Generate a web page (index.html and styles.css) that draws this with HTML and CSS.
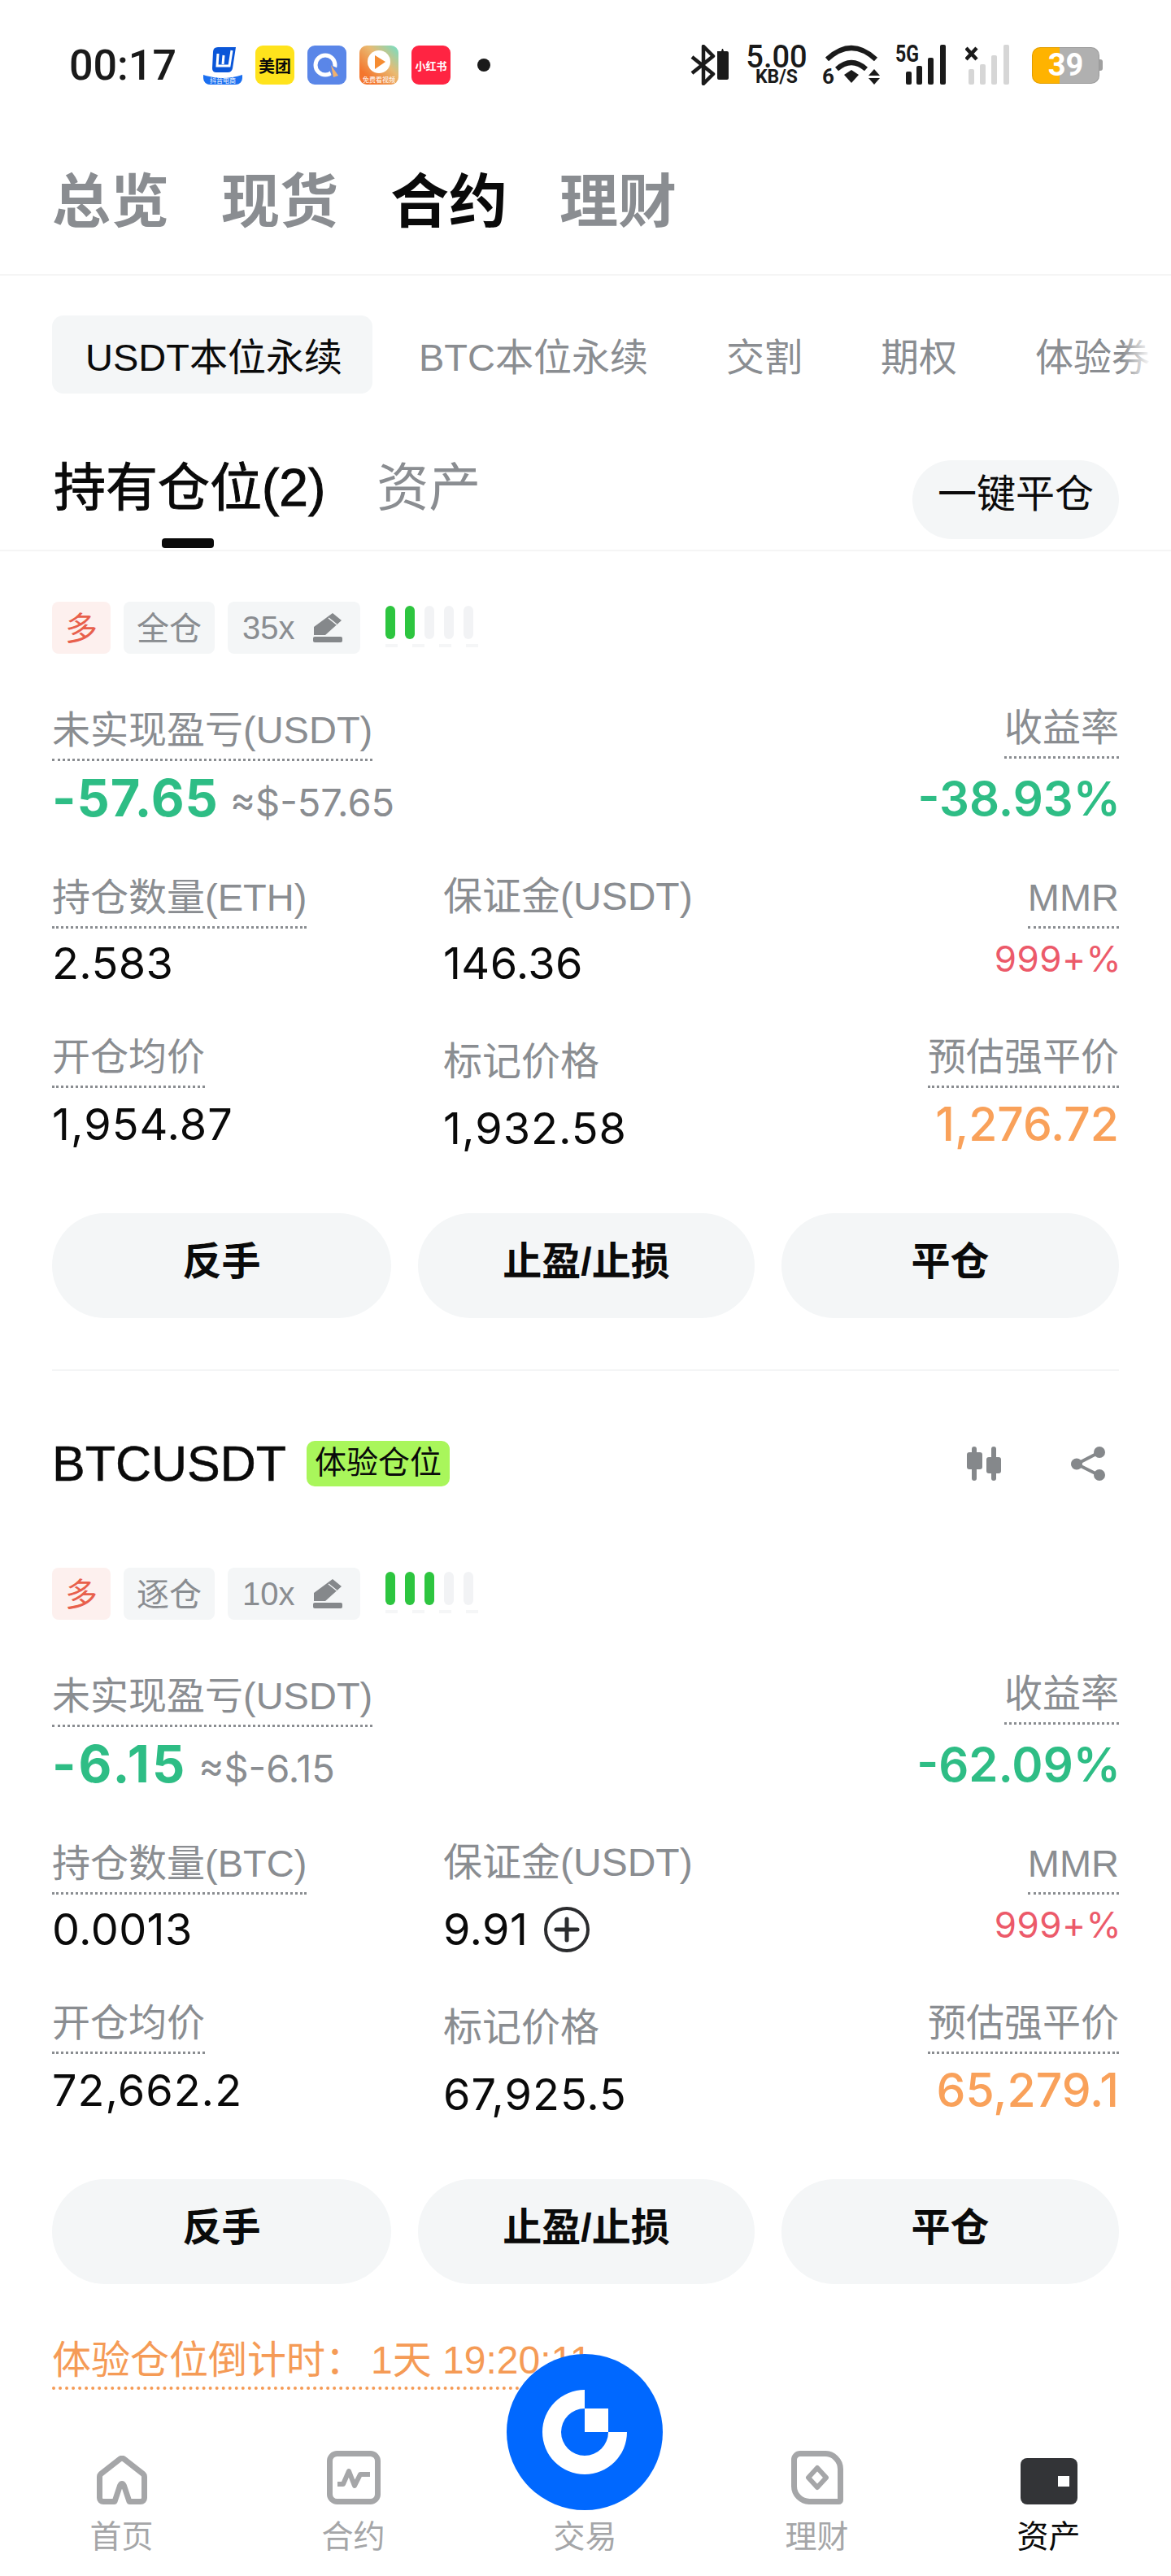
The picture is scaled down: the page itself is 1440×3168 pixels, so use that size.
FILE: index.html
```html
<!DOCTYPE html>
<html lang="zh-CN">
<head>
  <meta charset="UTF-8">
  <meta name="viewport" content="width=device-width, initial-scale=1.0">
  <title>合约</title>
  <link rel="stylesheet" href="styles.css">
</head>
<body>
  <div class="page">
    <!-- status bar -->
    <div class="status">
      <span class="time">00:17</span>
      <div class="apps">
        <svg class="app" viewBox="0 0 48 48"><path d="M0 36q24 8 48 0v4a8 8 0 0 1-8 8H8a8 8 0 0 1-8-8z" fill="#1b6ff0"/><path d="M12 8q0-6 6-6h22l-4 26q-1 5-6 5H16q-5 0-5-5z" fill="#0a56d8"/><path d="M18 10l-1 15h15l3-19" fill="none" stroke="#fff" stroke-width="3"/><path d="M25 12l-1 11" stroke="#fff" stroke-width="3"/><text x="24" y="46" class="app-tiny">抖音电商</text></svg>
        <span class="app app-meituan">美团</span>
        <svg class="app" viewBox="0 0 48 48"><rect width="48" height="48" rx="9" fill="#5a86e8"/><circle cx="22" cy="24" r="12" fill="none" stroke="#fff" stroke-width="5"/><path d="M24 22l14 6 1 11-8 1z" fill="#5a86e8"/><path d="M29 24l9 13-6 2z" fill="#eeb070"/></svg>
        <svg class="app" viewBox="0 0 48 48"><defs><linearGradient id="appg" x1="0" y1="1" x2="1" y2="0"><stop offset="0.2" stop-color="#f4762d"/><stop offset="0.6" stop-color="#e9ba72"/><stop offset="1" stop-color="#6fe0c8"/></linearGradient></defs><rect width="48" height="48" rx="9" fill="url(#appg)"/><circle cx="24" cy="20" r="14" fill="#fff"/><path d="M19 12l13 8-13 9z" fill="#f58c32"/><text x="24" y="45" class="app-tiny">免费看视频</text></svg>
        <span class="app app-red">小红书</span>
      </div>
      <span class="dot"></span>
      <div class="sys">
        <svg class="sys-bt" viewBox="0 0 49 50"><path d="M2 15l26 21-12 12V2l12 12L2 35" fill="none" stroke="#1a1a1a" stroke-width="4.500" stroke-linejoin="round"/><path d="M33 8h5l1-3h1l1 3h4a2 2 0 0 1 2 2v31a2 2 0 0 1-2 2H35a2 2 0 0 1-2-2z" fill="#1a1a1a"/></svg>
        <div class="speed"><b>5.00</b><i>KB/S</i></div>
        <svg class="sys-wifi" viewBox="0 0 72 50" fill="none" stroke="#1a1a1a" stroke-width="6"><path d="M5 18q30-28 60 0"/><path d="M17 30q18-16 36 0"/><path d="M26 37l9-6 9 6-9 10z" fill="#1a1a1a" stroke="none"/><path d="M56 38h14l-7-8zM56 41h14l-7 8z" fill="#1a1a1a" stroke="none"/><text x="-1" y="48" class="wifi-six">6</text></svg>
        <svg class="sys-sig" viewBox="0 0 64 50"><text x="0" y="21" class="sig-five" textLength="29" lengthAdjust="spacingAndGlyphs">5G</text><rect x="13" y="33" width="7" height="16" rx="2"/><rect x="26" y="26" width="7" height="23" rx="2"/><rect x="40" y="16" width="7" height="33" rx="2"/><rect x="55" y="0" width="7" height="49" rx="2"/></svg>
        <svg class="sys-x" viewBox="0 0 54 50"><path d="M1 4l13 14M14 4L1 18" stroke="#1a1a1a" stroke-width="4.500"/><g fill="#d6d6d6"><rect x="4" y="30" width="7" height="19" rx="2"/><rect x="18" y="24" width="7" height="25" rx="2"/><rect x="32" y="13" width="7" height="36" rx="2"/><rect x="47" y="0" width="7" height="49" rx="2"/></g></svg>
        <div class="battery">39</div>
      </div>
    </div>

    <div class="top-tabs">
      <span>总览</span>
      <span>现货</span>
      <span class="on">合约</span>
      <span>理财</span>
    </div>

    <div class="sub-tabs">
      <span class="on">USDT本位永续</span>
      <span>BTC本位永续</span>
      <span>交割</span>
      <span>期权</span>
      <span>体验券</span>
    </div>

    <div class="pos-tabs">
      <div class="pos-tab on">持有仓位(2)</div>
      <div class="pos-tab">资产</div>
      <div class="close-all">一键平仓</div>
    </div>

    <div class="content">
      <!-- first position, symbol row is scrolled away -->
      <div class="tags">
        <span class="tag tag-long">多</span>
        <span class="tag">全仓</span>
        <span class="tag tag-lev">35x
          <svg class="pencil" viewBox="0 0 36 36"><path d="M24 0l11 9-20 18H1V17z" fill="#85888b"/><path d="M19 6l10 8" stroke="#f4f6f7" stroke-width="1.500"/><rect y="29" width="36" height="7" rx="2" fill="#85888b"/></svg>
        </span>
        <div class="meter">
          <div class="meter-bars"><span class="lit"></span><span class="lit"></span><span></span><span></span><span></span></div>
          <div class="meter-dash"><span></span><span></span><span></span><span></span></div>
        </div>
      </div>

      <div class="row row-pnl">
        <div class="cell">
          <span class="label dotted">未实现盈亏(USDT)</span>
          <div class="pnl"><b>-57.65</b><span>≈$-57.65</span></div>
        </div>
        <div class="cell right">
          <span class="label dotted up">收益率</span>
          <div class="rate">-38.93%</div>
        </div>
      </div>

      <div class="row row-two">
        <div class="cell">
          <span class="label dotted">持仓数量(ETH)</span>
          <div class="val">2.583</div>
        </div>
        <div class="cell mid">
          <span class="label plain">保证金(USDT)</span>
          <div class="val">146.36</div>
        </div>
        <div class="cell right">
          <span class="label dotted">MMR</span>
          <div class="val val-red">999+%</div>
        </div>
      </div>

      <div class="row row-three">
        <div class="cell">
          <span class="label dotted">开仓均价</span>
          <div class="val">1,954.87</div>
        </div>
        <div class="cell mid">
          <span class="label plain low">标记价格</span>
          <div class="val">1,932.58</div>
        </div>
        <div class="cell right">
          <span class="label dotted">预估强平价</span>
          <div class="val val-orange">1,276.72</div>
        </div>
      </div>

      <div class="actions">
        <span>反手</span>
        <span>止盈/止损</span>
        <span>平仓</span>
      </div>

      <div class="sep"></div>

      <!-- second position -->
      <div class="symbol">
        <span class="symbol-name">BTCUSDT</span>
        <span class="badge">体验仓位</span>
        <svg class="sym-candle" viewBox="0 0 42 42" fill="#85888b"><rect x="6" y="0" width="6" height="42" rx="3"/><rect x="0" y="7" width="19" height="21" rx="3"/><rect x="30" y="0" width="6" height="42" rx="3"/><rect x="24" y="13" width="18" height="20" rx="3"/></svg>
        <svg class="sym-share" viewBox="0 0 42 42" fill="#85888b"><path d="M35 7L7 21.500l28 14" fill="none" stroke="#85888b" stroke-width="4"/><circle cx="35" cy="7" r="7"/><circle cx="7" cy="21.500" r="7"/><circle cx="35" cy="35" r="7"/></svg>
      </div>

      <div class="tags">
        <span class="tag tag-long">多</span>
        <span class="tag">逐仓</span>
        <span class="tag tag-lev">10x
          <svg class="pencil" viewBox="0 0 36 36"><path d="M24 0l11 9-20 18H1V17z" fill="#85888b"/><path d="M19 6l10 8" stroke="#f4f6f7" stroke-width="1.500"/><rect y="29" width="36" height="7" rx="2" fill="#85888b"/></svg>
        </span>
        <div class="meter">
          <div class="meter-bars"><span class="lit"></span><span class="lit"></span><span class="lit"></span><span></span><span></span></div>
          <div class="meter-dash"><span></span><span></span><span></span><span></span></div>
        </div>
      </div>

      <div class="row row-pnl">
        <div class="cell">
          <span class="label dotted">未实现盈亏(USDT)</span>
          <div class="pnl pnl-short"><b>-6.15</b><span>≈$-6.15</span></div>
        </div>
        <div class="cell right">
          <span class="label dotted up">收益率</span>
          <div class="rate">-62.09%</div>
        </div>
      </div>

      <div class="row row-two">
        <div class="cell">
          <span class="label dotted">持仓数量(BTC)</span>
          <div class="val">0.0013</div>
        </div>
        <div class="cell mid">
          <span class="label plain">保证金(USDT)</span>
          <div class="val val-add">9.91
            <svg class="plus" viewBox="0 0 56 56" fill="none" stroke="#2b2c2e"><circle cx="28" cy="28" r="26" stroke-width="4"/><path d="M15 28h26M28 15v26" stroke-width="5" stroke-linecap="round"/></svg>
          </div>
        </div>
        <div class="cell right">
          <span class="label dotted">MMR</span>
          <div class="val val-red">999+%</div>
        </div>
      </div>

      <div class="row row-three">
        <div class="cell">
          <span class="label dotted">开仓均价</span>
          <div class="val">72,662.2</div>
        </div>
        <div class="cell mid">
          <span class="label plain low">标记价格</span>
          <div class="val">67,925.5</div>
        </div>
        <div class="cell right">
          <span class="label dotted">预估强平价</span>
          <div class="val val-orange">65,279.1</div>
        </div>
      </div>

      <div class="actions">
        <span>反手</span>
        <span>止盈/止损</span>
        <span>平仓</span>
      </div>

      <div class="countdown">体验仓位倒计时：<span>1天 19:20:11</span></div>
    </div>

    <!-- bottom nav -->
    <div class="nav">
      <div class="nav-item">
        <svg class="nav-home" viewBox="0 0 62 60" fill="none" stroke="#a5a6a8" stroke-width="7" stroke-linejoin="round"><path d="M22 56.500H8a4.500 4.500 0 0 1-4.500-4.500V26q0-2 1.500-3.500L28 4.500q3-2.500 6 0l23 18q1.500 1.500 1.500 3.500v26a4.500 4.500 0 0 1-4.500 4.500H40L33.500 37q-2.500-5-5 0z"/></svg>
        <span>首页</span>
      </div>
      <div class="nav-item">
        <svg class="nav-chart" viewBox="0 0 66 66" fill="none" stroke="#a5a6a8"><rect x="3.500" y="3.500" width="59" height="59" rx="9" stroke-width="7"/><path d="M13 41h7l7-16 7 18 7-14h12" stroke-width="6" stroke-linejoin="round"/></svg>
        <span>合约</span>
      </div>
      <div class="nav-item nav-trade">
        <div class="trade-btn">
          <svg viewBox="0 0 192 192"><circle cx="96" cy="96" r="96" fill="#0068ff"/><path d="M96 44A52 52 0 1 0 148 96H125A29 29 0 1 1 96 67z" fill="#fff"/><rect x="96" y="67" width="29" height="29" fill="#fff"/></svg>
        </div>
        <span>交易</span>
      </div>
      <div class="nav-item">
        <svg class="nav-earn" viewBox="0 0 64 66" fill="none" stroke="#a5a6a8"><path d="M11 3.500h30a19 19 0 0 1 19.500 19v38a2 2 0 0 1-2 2H23A19 19 0 0 1 3.500 43.500V11a7.500 7.500 0 0 1 7.500-7.500z" stroke-width="7"/><path d="M32 21l11 12-11 12-11-12z" stroke-width="6" stroke-linejoin="round"/></svg>
        <span>理财</span>
      </div>
      <div class="nav-item on">
        <svg class="nav-wallet" viewBox="0 0 70 57"><rect width="70" height="57" rx="8" fill="#333437"/><rect x="46" y="22" width="14" height="13" fill="#fff"/></svg>
        <span>资产</span>
      </div>
    </div>
  </div>
</body>
</html>
```

FILE: styles.css
```css
* {
  box-sizing: border-box;
}
html, body {
  margin: 0;
  padding: 0;
  background: #fff;
}
body {
  font-family: "Liberation Sans", "Noto Sans CJK SC", sans-serif;
  color: #0a0a0a;
}
.page {
  position: relative;
  width: 1440px;
  height: 3168px;
  overflow: hidden;
  background: #fff;
}

/* status bar */
.status {
  display: flex;
  align-items: center;
  height: 160px;
  padding: 0 88px 0 85px;
}
.time {
  font-family: Roboto, sans-serif;
  font-weight: 500;
  font-size: 52px;
  color: #1a1a1a;
  width: 165px;
}
.apps {
  display: flex;
  gap: 16px;
}
.app {
  width: 48px;
  height: 48px;
  display: block;
}
.app-tiny {
  font-size: 8px;
  fill: #fff;
  text-anchor: middle;
}
.app-meituan {
  display: flex;
  align-items: center;
  justify-content: center;
  background: #ffe31c;
  border-radius: 9px;
  font-size: 20px;
  font-weight: 700;
}
.app-red {
  display: flex;
  align-items: center;
  justify-content: center;
  background: #ff2442;
  border-radius: 9px;
  color: #fff;
  font-size: 13px;
  font-weight: 700;
}
.dot {
  width: 16px;
  height: 16px;
  border-radius: 50%;
  background: #1a1a1a;
  margin-left: 33px;
}
.sys {
  display: flex;
  align-items: center;
  margin-left: auto;
}
.sys-bt {
  width: 49px;
  height: 50px;
}
.speed {
  width: 80px;
  margin-left: 17px;
  text-align: center;
  font-family: Roboto, sans-serif;
  color: #1a1a1a;
}
.speed b {
  display: block;
  font-size: 38px;
  font-weight: 500;
  line-height: 28px;
}
.speed i {
  display: block;
  font-style: normal;
  font-size: 23px;
  font-weight: 700;
  line-height: 21px;
}
.sys-wifi {
  width: 72px;
  height: 50px;
  margin-left: 17px;
  overflow: visible;
}
.wifi-six {
  font-family: Roboto, sans-serif;
  font-size: 26px;
  font-weight: 700;
  fill: #1a1a1a;
  stroke: none;
}
.sys-sig {
  width: 64px;
  height: 50px;
  margin-left: 17px;
  fill: #1a1a1a;
  overflow: visible;
}
.sig-five {
  font-family: Roboto, sans-serif;
  font-size: 29px;
  font-weight: 700;
}
.sys-x {
  width: 54px;
  height: 50px;
  margin-left: 22px;
}
.battery {
  position: relative;
  width: 83px;
  height: 45px;
  margin-left: 28px;
  border-radius: 10px;
  background: linear-gradient(90deg, #ffb300 0 41%, #b0b0b0 41%);
  box-shadow: inset 0 0 0 1px rgba(0, 0, 0, 0.12);
  color: #fff;
  font-family: Roboto, sans-serif;
  font-size: 38px;
  font-weight: 700;
  line-height: 45px;
  text-align: center;
}
.battery::after {
  content: "";
  position: absolute;
  right: -4px;
  top: 15px;
  width: 4px;
  height: 14px;
  background: #a0a0a0;
  border-radius: 0 3px 3px 0;
}

/* top tabs */
.top-tabs {
  display: flex;
  gap: 64px;
  height: 179px;
  padding: 52px 0 0 64px;
  border-bottom: 2px solid #f5f5f5;
  font-size: 72px;
  font-weight: 700;
  line-height: 72px;
  color: #8a8d91;
}
.top-tabs .on {
  color: #0a0a0a;
}

/* sub tabs */
.sub-tabs {
  position: relative;
  display: flex;
  gap: 96px;
  height: 96px;
  margin: 49px 0 0;
  padding-left: 105px;
  overflow: hidden;
  font-size: 47px;
  line-height: 103px;
  color: #8a8d91;
  white-space: nowrap;
}
.sub-tabs .on {
  color: #0a0a0a;
  background: #f4f6f7;
  border-radius: 14px;
  margin-left: -41px;
  padding: 0 37px 0 41px;
  margin-right: -39px;
}
.sub-tabs::after {
  content: "";
  position: absolute;
  top: 0;
  right: 0;
  width: 60px;
  height: 100%;
  background: linear-gradient(90deg, rgba(255, 255, 255, 0), #fff 60%);
}

/* holdings / assets */
.pos-tabs {
  display: flex;
  height: 194px;
  padding: 78px 64px 0 66px;
  border-bottom: 2px solid #f5f5f5;
}
.pos-tab {
  position: relative;
  font-size: 64px;
  line-height: 76px;
  color: #8a8d91;
  margin-right: 63px;
}
.pos-tab.on {
  color: #0a0a0a;
  -webkit-text-stroke: 1px #0a0a0a;
}
.pos-tab.on::after {
  content: "";
  position: absolute;
  left: 133px;
  top: 100px;
  width: 64px;
  height: 12px;
  border-radius: 4px;
  background: #0a0a0a;
}
.close-all {
  width: 254px;
  height: 97px;
  margin: 4px 0 0 auto;
  border-radius: 49px;
  background: #f4f6f7;
  font-size: 48px;
  line-height: 84px;
  text-align: center;
}

.content {
  padding: 62px 64px 0;
}

/* tags */
.tags {
  display: flex;
  gap: 16px;
  height: 64px;
  font-size: 40px;
  line-height: 66px;
  color: #8a8d91;
}
.tag {
  padding: 0 16px;
  border-radius: 8px;
  background: #f4f6f7;
  white-space: nowrap;
}
.tag-long {
  background: #fdf0ee;
  color: #e8604c;
}
.tag-lev {
  display: flex;
  align-items: center;
  justify-content: space-between;
  width: 163px;
  padding: 0 22px 0 18px;
}
.pencil {
  width: 36px;
  height: 36px;
  flex: none;
}
.meter {
  margin-left: 15px;
  padding-top: 5px;
}
.meter-bars {
  display: flex;
  gap: 12px;
}
.meter-bars span {
  width: 12px;
  height: 41px;
  border-radius: 6px;
  background: #f2f3f5;
}
.meter-bars .lit {
  background: #2dc53f;
}
.meter-dash {
  display: flex;
  gap: 18px;
  margin-top: 6px;
}
.meter-dash span {
  width: 15px;
  height: 4px;
  background: #f5f6f7;
}

/* metric rows */
.row {
  display: grid;
  grid-template-columns: 481px 1fr auto;
}
.row-pnl {
  grid-template-columns: 1fr auto;
  margin-top: 64px;
}
.row-two {
  margin-top: 52px;
}
.row-three {
  margin-top: 50px;
}
.cell {
  display: flex;
  flex-direction: column;
  align-items: flex-start;
  min-width: 0;
}
.cell.right {
  align-items: flex-end;
}
.label {
  font-size: 47px;
  line-height: 60px;
  color: #8a8d91;
  white-space: nowrap;
}
.label.dotted {
  padding-bottom: 5px;
  border-bottom: 3px dotted #8a8d91;
}
.label.up {
  margin-top: -3px;
  margin-bottom: 1px;
}
.label.plain {
  font-size: 48px;
  margin-top: -1px;
  margin-bottom: 9px;
}
.label.plain.low {
  margin-top: 6px;
  margin-bottom: 7px;
}
.pnl {
  display: flex;
  align-items: baseline;
  gap: 14px;
  margin-top: 10px;
  font-family: Inter, sans-serif;
  line-height: 70px;
  white-space: nowrap;
}
.pnl b {
  font-size: 63px;
  font-weight: 700;
  letter-spacing: 1px;
  color: #2ebd85;
}
.pnl span {
  font-size: 47px;
  color: #8a8d91;
}
.pnl-short b {
  letter-spacing: 3px;
}
.rate {
  margin: 13px -2px -2px 0;
  font-family: Inter, sans-serif;
  font-size: 58px;
  font-weight: 600;
  line-height: 70px;
  color: #2ebd85;
}
.val {
  margin-top: 8px;
  font-family: Inter, sans-serif;
  font-size: 54px;
  letter-spacing: 0.4px;
  line-height: 70px;
  white-space: nowrap;
}
.row-three .val {
  margin-top: 10px;
  letter-spacing: 1px;
}
.val-red {
  margin: 2px -3px 0 0;
  font-size: 44px;
  color: #ec5a6a;
}
.row-three .val-orange {
  font-size: 57px;
  font-weight: 500;
  letter-spacing: 0;
  color: #f9a15a;
}
.val-add {
  display: flex;
  align-items: center;
  gap: 20px;
}
.plus {
  width: 56px;
  height: 56px;
}

/* buttons */
.actions {
  display: grid;
  grid-template-columns: 417px 414px 415px;
  justify-content: space-between;
  margin-top: 69px;
}
.actions span {
  height: 129px;
  border-radius: 65px;
  background: #f4f6f7;
  font-size: 48px;
  font-weight: 700;
  line-height: 120px;
  text-align: center;
}
.sep {
  height: 2px;
  margin-top: 63px;
  background: #f4f5f6;
}

/* symbol header */
.symbol {
  display: flex;
  align-items: center;
  height: 56px;
  margin-top: 86px;
}
.symbol-name {
  font-size: 61px;
  line-height: 52px;
  -webkit-text-stroke: 0.5px #0a0a0a;
}
.badge {
  margin-left: 25px;
  padding: 0 10px;
  height: 56px;
  border-radius: 10px;
  background: #a9f65b;
  font-size: 39px;
  line-height: 54px;
}
.sym-candle {
  width: 42px;
  height: 42px;
  margin-left: auto;
}
.sym-share {
  width: 42px;
  height: 42px;
  margin: 0 17px 0 86px;
}
.symbol + .tags {
  margin-top: 100px;
}

.countdown {
  display: inline-block;
  margin-top: 62px;
  border-bottom: 4px dotted #f59b56;
  font-size: 48px;
  line-height: 64px;
  color: #f59b56;
  white-space: nowrap;
}
.countdown span {
  margin-left: 8px;
}

/* bottom nav, laid over the list */
.nav {
  position: absolute;
  left: 0;
  right: 0;
  bottom: 0;
  display: grid;
  grid-template-columns: repeat(5, 285px);
  height: 168px;
  padding: 14px 0 0 7px;
  background: #fff;
}
.nav-item {
  display: flex;
  flex-direction: column;
  align-items: center;
  justify-content: flex-end;
  height: 131px;
  font-size: 39px;
  line-height: 50px;
  color: #a5a6a8;
}
.nav-item.on {
  color: #0a0a0a;
}
.nav-item svg {
  display: block;
  margin-bottom: 15px;
}
.nav-home {
  width: 62px;
  height: 60px;
}
.nav-chart {
  width: 66px;
  height: 66px;
}
.nav-earn {
  width: 64px;
  height: 66px;
}
.nav-wallet {
  width: 70px;
  height: 57px;
}
.nav-trade {
  position: relative;
}
.trade-btn {
  position: absolute;
  left: 46px;
  top: -119px;
  width: 192px;
  height: 192px;
}
.trade-btn svg {
  width: 192px;
  height: 192px;
  margin: 0;
}
```
